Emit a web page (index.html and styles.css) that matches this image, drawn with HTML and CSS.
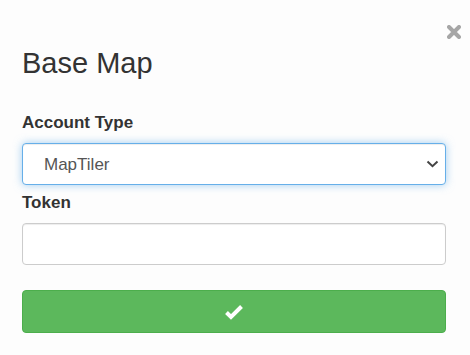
FILE: index.html
```html
<!DOCTYPE html>
<html>
<head>
    <meta name="viewport" content="width=device-width, initial-scale=1.0">
    <title>Base Map</title>
    <link rel="stylesheet" href="styles.css">
</head>
<body>
    <!-- Base map dialog -->
    <div class="dialog">
        <button class="close" type="button" aria-label="Close">
            <svg width="14" height="14" viewBox="0 0 14 14">
                <path d="M2 2 L12 12 M12 2 L2 12" stroke="#a6a6a6" stroke-width="4" stroke-linecap="round" fill="none"/>
            </svg>
        </button>

        <h3 class="title">Base Map</h3>

        <div class="field">
            <label for="accountType">Account Type</label>
            <div class="select-wrap">
                <select id="accountType" class="control focused">
                    <option>MapTiler</option>
                    <option>Mapbox</option>
                </select>
                <svg class="chevron" width="13" height="8" viewBox="0 0 13 8">
                    <polyline points="1.5,1.5 6.5,6.2 11.5,1.5" stroke="#444" stroke-width="2" fill="none"/>
                </svg>
            </div>
        </div>

        <div class="field">
            <label for="token">Token</label>
            <input type="text" id="token" class="control">
        </div>

        <button class="btn-ok" type="button" aria-label="Save">
            <svg width="20" height="16" viewBox="0 0 20 16">
                <polyline points="2.5,8.5 7,13 17.5,2.5" stroke="#fff" stroke-width="4" fill="none"/>
            </svg>
        </button>
    </div>
</body>
</html>
```

FILE: styles.css
```css
body {
    margin: 0;
    background-color: #fdfdfd;
    font-family: "Liberation Sans", Arial, sans-serif;
    color: #333;
}

.dialog {
    position: relative;
    padding: 47px 24px 20px 22px;
}

.close {
    position: absolute;
    top: 25px;
    right: 9px;
    width: 14px;
    height: 14px;
    padding: 0;
    border: none;
    background: none;
    cursor: pointer;
}

.close svg {
    display: block;
}

.title {
    margin: 0 0 34px;
    font-size: 29px;
    font-weight: normal;
    line-height: 32px;
    color: #333;
}

.field {
    margin-bottom: 8px;
}

.field label {
    display: block;
    margin-bottom: 10px;
    font-size: 17px;
    font-weight: bold;
    line-height: 20px;
}

.control {
    display: block;
    box-sizing: border-box;
    width: 100%;
    height: 42px;
    margin: 0;
    padding: 0 12px;
    font-family: "Liberation Sans", Arial, sans-serif;
    font-size: 17px;
    color: #555;
    background-color: #fff;
    border: 1px solid #ccc;
    border-radius: 4px;
    box-shadow: inset 0 1px 1px rgba(0, 0, 0, 0.075);
}

select.control {
    appearance: none;
    -webkit-appearance: none;
    padding-left: 21px;
}

.control.focused {
    border-color: #66afe9;
    outline: 0;
    box-shadow: inset 0 1px 1px rgba(0, 0, 0, 0.075), 0 0 8px rgba(102, 175, 233, 0.6);
}

.select-wrap {
    position: relative;
}

.chevron {
    position: absolute;
    top: 17px;
    right: 7px;
    pointer-events: none;
}

.btn-ok {
    display: flex;
    align-items: center;
    justify-content: center;
    box-sizing: border-box;
    width: 100%;
    height: 43px;
    margin-top: 25px;
    padding: 0;
    background-color: #5cb85c;
    border: 1px solid #4cae4c;
    border-radius: 4px;
    cursor: pointer;
}

.btn-ok:hover {
    background-color: #449d44;
}
```
